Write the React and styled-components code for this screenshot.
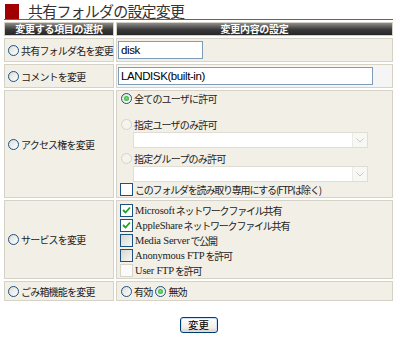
import React from 'react'
import styled, { createGlobalStyle } from 'styled-components'

const GlobalStyle = createGlobalStyle`
  body {
    margin: 0;
    background: #fff;
    font-family: "Noto Sans CJK JP", "Liberation Sans", sans-serif;
    font-size: 10px;
    letter-spacing: -0.8px;
    color: #222;
  }
`

const Page = styled.div`
  width: 389px;
  padding: 3px 0 0 4px;
`

const TitleBar = styled.div`
  display: flex;
  align-items: center;
  height: 16px;
  border-bottom: 1px solid #b84040;
`

const TitleMark = styled.span`
  width: 14px;
  height: 15px;
  background: #a00000;
  margin: 0 9px 0 1px;
`

const TitleText = styled.h1`
  margin: 0;
  font-size: 15px;
  font-weight: 400;
  letter-spacing: -0.8px;
  color: #333;
  line-height: 16px;
`

const Table = styled.div`
  display: grid;
  grid-template-columns: 110px 1fr;
  gap: 2px;
  margin-top: 2px;
`

const HeadCell = styled.div`
  height: 12px;
  line-height: 12px;
  border: 1px solid #d4d0c4;
  background: linear-gradient(#8c8c8c, #3a3a3a 55%, #262626);
  color: #fff;
  font-weight: 700;
  font-size: 10px;
  letter-spacing: -0.3px;
  text-align: center;
`

const Cell = styled.div`
  border: 1px solid #d6d2c6;
  background: ${p => p.$bg || '#f2efe6'};
  display: flex;
  flex-direction: ${p => (p.$column ? 'column' : 'row')};
  align-items: ${p => (p.$column ? 'stretch' : 'center')};
  height: ${p => p.$h}px;
  padding: ${p => p.$pad || '0'};
  box-sizing: border-box;
`

const Label = styled.label`
  display: flex;
  align-items: center;
  height: ${p => p.$h || 14}px;
  margin-top: ${p => p.$mt || 0}px;
  margin-right: ${p => p.$mr || 0}px;
  white-space: nowrap;
  letter-spacing: ${p => p.$ls || 'inherit'};
`

// Latin words in the service list are set in a serif face
const Roman = styled.span`
  font-family: "Liberation Serif", serif;
  font-size: 10.5px;
  letter-spacing: -0.2px;
  margin-right: 1px;
`

const Radio = styled.span`
  position: relative;
  width: 9px;
  height: 9px;
  border-radius: 50%;
  border: 1px solid ${p => (p.$disabled ? '#d6d3c8' : '#1c5180')};
  background: ${p => (p.$disabled ? '#f4f3ee' : 'linear-gradient(135deg, #dcdcd7, #fff)')};
  margin: 0 2px 0 ${p => p.$ml ?? 4}px;
  flex-shrink: 0;

  &::after {
    content: '';
    display: ${p => (p.$on ? 'block' : 'none')};
    position: absolute;
    left: 2px;
    top: 2px;
    width: 5px;
    height: 5px;
    border-radius: 50%;
    background: radial-gradient(#7be27b, #21a121);
  }
`

const Check = styled.span`
  position: relative;
  width: 11px;
  height: 11px;
  border: 1px solid ${p => (p.$disabled ? '#d6d3c8' : '#1c5180')};
  background: ${p => (p.$disabled ? '#fafaf8' : p.$gray ? 'linear-gradient(135deg, #d8d8d2, #f6f6f4)' : '#fff')};
  margin: 0 2px 0 ${p => p.$ml ?? 3}px;
  flex-shrink: 0;
`

const Tick = styled.svg`
  position: absolute;
  left: 1px;
  top: 1px;
`

const TextInput = styled.input`
  box-sizing: border-box;
  width: ${p => p.$w}px;
  height: 18px;
  margin-left: 1px;
  border: 1px solid #7f9db9;
  padding: 0 2px;
  font-family: "Liberation Sans", sans-serif;
  font-size: 11.5px;
  letter-spacing: -0.4px;
  color: #000;
  background: #fff;
`

const Select = styled.div`
  box-sizing: border-box;
  width: 235px;
  height: 16px;
  margin-left: 16px;
  border: 1px solid #e0ddd4;
  background: #fff;
  display: flex;
  justify-content: flex-end;
`

const Arrow = styled.span`
  width: 14px;
  height: 14px;
  background: #f7f7f4;
  border-left: 1px solid #ecebe6;
  display: flex;
  align-items: center;
  justify-content: center;
`

const Inline = styled.div`
  display: flex;
  align-items: center;
`

const Footer = styled.div`
  display: flex;
  justify-content: center;
  margin-top: 16px;
`

const Button = styled.button`
  width: 38px;
  height: 16px;
  padding: 0;
  border: 1px solid #003c74;
  border-radius: 3px;
  background: linear-gradient(#fff, #f0efe9 70%, #d6d0c5);
  box-shadow: inset 0 0 0 1px #cfe0f8;
  font-family: "Noto Sans CJK JP", sans-serif;
  font-size: 10.5px;
  line-height: 12px;
  color: #000;
`

const Tickmark = () => (
  <Tick width="9" height="9" viewBox="0 0 9 9">
    <path d="M1 4 L3.5 6.5 L8 1.5" fill="none" stroke="#21a121" strokeWidth="1.8" />
  </Tick>
)

const Chevron = () => (
  <svg width="8" height="5" viewBox="0 0 8 5">
    <path d="M0.5 0.5 L4 4 L7.5 0.5" fill="none" stroke="#c8c8d0" strokeWidth="1" />
  </svg>
)

const services = [
  { en: 'Microsoft', ja: 'ネットワークファイル共有', on: true },
  { en: 'AppleShare', ja: 'ネットワークファイル共有', on: true },
  { en: 'Media Server', ja: 'で公開', gray: true },
  { en: 'Anonymous FTP', ja: 'を許可', gray: true },
  { en: 'User FTP', ja: 'を許可', disabled: true }
]

const App = () => (
  <Page>
    <GlobalStyle />
    <TitleBar>
      <TitleMark />
      <TitleText>共有フォルダの設定変更</TitleText>
    </TitleBar>

    <Table>
      <HeadCell>変更する項目の選択</HeadCell>
      <HeadCell>変更内容の設定</HeadCell>

      <Cell $h={24}>
        <Label><Radio $ml={3} />共有フォルダ名を変更</Label>
      </Cell>
      <Cell $h={24}>
        <TextInput $w={85} defaultValue="disk" />
      </Cell>

      <Cell $h={24}>
        <Label><Radio $ml={3} />コメントを変更</Label>
      </Cell>
      <Cell $h={24} $bg="#f5f5f6">
        <TextInput $w={255} defaultValue="LANDISK(built-in)" />
      </Cell>

      <Cell $h={108}>
        <Label><Radio $ml={3} />アクセス権を変更</Label>
      </Cell>
      <Cell $h={108} $column $pad="1px 0 0 0">
        <Label $h={12}><Radio $on />全てのユーザに許可</Label>
        <Label $h={16} $mt={12}><Radio $disabled />指定ユーザのみ許可</Label>
        <Select><Arrow><Chevron /></Arrow></Select>
        <Label $h={16} $mt={2}><Radio $disabled />指定グループのみ許可</Label>
        <Select><Arrow><Chevron /></Arrow></Select>
        <Label $h={14} $ls="-1.2px"><Check />このフォルダを読み取り専用にする(FTPは除く)</Label>
      </Cell>

      <Cell $h={79}>
        <Label><Radio $ml={3} />サービスを変更</Label>
      </Cell>
      <Cell $h={79} $column $pad="2px 0 0 0">
        {services.map(s => (
          <Label key={s.en} $h={15} $ls="-1.2px">
            <Check $gray={s.gray} $disabled={s.disabled}>{s.on && <Tickmark />}</Check>
            <Roman>{s.en}</Roman>{s.ja}
          </Label>
        ))}
      </Cell>

      <Cell $h={20}>
        <Label><Radio $ml={3} />ごみ箱機能を変更</Label>
      </Cell>
      <Cell $h={20}>
        <Inline>
          <Label $mr={2}><Radio />有効</Label>
          <Label><Radio $ml={1} $on />無効</Label>
        </Inline>
      </Cell>
    </Table>

    <Footer>
      <Button>変更</Button>
    </Footer>
  </Page>
)

export default App
